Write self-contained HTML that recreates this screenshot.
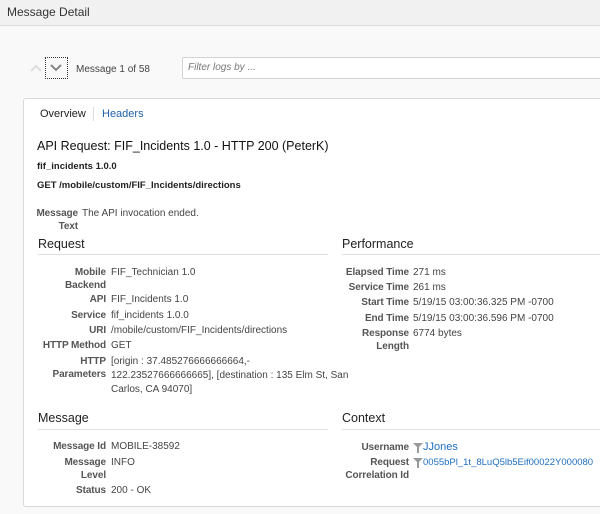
<!DOCTYPE html>
<html><head><style>
*{margin:0;padding:0;box-sizing:border-box}
body{width:600px;height:514px;overflow:hidden;background:#f9f9f9;font-family:"Liberation Sans",Arial,sans-serif;color:#333;position:relative}
.a{position:absolute;white-space:nowrap}
.hdr{position:absolute;left:0;top:0;width:600px;height:26px;background:#f1f1f1;border-bottom:1px solid #dcdcdc}
.panel{position:absolute;left:23px;top:98px;width:600px;height:409px;background:#fff;border:1px solid #d9d9d9;border-radius:3px}
.l{position:absolute;text-align:right;font-size:10px;color:#555;font-weight:bold;line-height:13px;letter-spacing:-0.1px}
.v{position:absolute;font-size:10px;color:#444;line-height:13px;white-space:nowrap}
.h{position:absolute;font-size:12.5px;color:#222;font-weight:normal}
.rule{position:absolute;height:1px;background:#dfe3e8}
.lnk{color:#1f6fbf}
</style></head><body>
<div class="hdr"></div>
<div class="a" style="left:7px;top:5px;font-size:12px;color:#333">Message Detail</div>
<svg class="a" style="left:29px;top:63px" width="14" height="10"><path d="M2 8 L7 3 L12 8" stroke="#ddd" stroke-width="2" fill="none"/></svg>
<div class="a" style="left:45px;top:57px;width:23px;height:22px;border:1px dotted #333"></div>
<svg class="a" style="left:49px;top:63px" width="14" height="10"><path d="M2 2 L7 7 L12 2" stroke="#888" stroke-width="2" fill="none"/></svg>
<div class="a" style="left:76px;top:64px;font-size:10px;color:#444">Message 1 of 58</div>
<div class="a" style="left:182px;top:57px;width:430px;height:22px;border:1px solid #d4d4d4;border-radius:2px;background:#fff"></div>
<div class="a" style="left:188px;top:62px;font-size:10px;color:#777;font-style:italic">Filter logs by ...</div>
<div class="panel"></div>
<div class="a" style="left:40px;top:108px;font-size:11px;color:#222">Overview</div>
<div class="a" style="left:93px;top:107px;width:1px;height:14px;background:#ddd"></div>
<div class="a" style="left:102px;top:108px;font-size:11px;color:#1f5fa8">Headers</div>
<div class="a" style="left:37px;top:139px;font-size:12.5px;color:#111">API Request: FIF_Incidents 1.0 - HTTP 200 (PeterK)</div>
<div class="a" style="left:37px;top:161px;font-size:9.5px;color:#222;font-weight:bold">fif_incidents 1.0.0</div>
<div class="a" style="left:37px;top:180px;font-size:9.5px;color:#222;font-weight:bold">GET /mobile/custom/FIF_Incidents/directions</div>
<div class="l" style="left:20px;width:58px;top:207px">Message<br>Text</div>
<div class="v" style="left:82px;top:207px">The API invocation ended.</div>

<div class="h" style="left:38px;top:237px">Request</div>
<div class="rule" style="left:38px;top:254px;width:290px"></div>
<div class="h" style="left:342px;top:237px">Performance</div>
<div class="rule" style="left:342px;top:254px;width:260px"></div>

<div class="l" style="left:20px;width:86px;top:266px">Mobile<br>Backend</div><div class="v" style="left:111px;top:266px">FIF_Technician 1.0</div>
<div class="l" style="left:20px;width:86px;top:293px">API</div><div class="v" style="left:111px;top:293px">FIF_Incidents 1.0</div>
<div class="l" style="left:20px;width:86px;top:309px">Service</div><div class="v" style="left:111px;top:309px">fif_incidents 1.0.0</div>
<div class="l" style="left:20px;width:86px;top:324px">URI</div><div class="v" style="left:111px;top:324px">/mobile/custom/FIF_Incidents/directions</div>
<div class="l" style="left:20px;width:86px;top:339px">HTTP Method</div><div class="v" style="left:111px;top:339px">GET</div>
<div class="l" style="left:20px;width:86px;top:355px">HTTP<br>Parameters</div><div class="v" style="left:111px;top:355px;line-height:14px">[origin : 37.485276666666664,-<br>122.23527666666665], [destination : 135 Elm St, San<br>Carlos, CA 94070]</div>

<div class="l" style="left:320px;width:89px;top:266px">Elapsed Time</div><div class="v" style="left:413px;top:266px">271 ms</div>
<div class="l" style="left:320px;width:89px;top:281px">Service Time</div><div class="v" style="left:413px;top:281px">261 ms</div>
<div class="l" style="left:320px;width:89px;top:296px">Start Time</div><div class="v" style="left:413px;top:296px">5/19/15 03:00:36.325 PM -0700</div>
<div class="l" style="left:320px;width:89px;top:312px">End Time</div><div class="v" style="left:413px;top:312px">5/19/15 03:00:36.596 PM -0700</div>
<div class="l" style="left:320px;width:89px;top:327px">Response<br>Length</div><div class="v" style="left:413px;top:327px">6774 bytes</div>

<div class="h" style="left:38px;top:411px">Message</div>
<div class="rule" style="left:38px;top:429px;width:290px"></div>
<div class="h" style="left:342px;top:411px">Context</div>
<div class="rule" style="left:342px;top:429px;width:260px"></div>

<div class="l" style="left:20px;width:86px;top:440px">Message Id</div><div class="v" style="left:111px;top:440px">MOBILE-38592</div>
<div class="l" style="left:20px;width:86px;top:456px">Message<br>Level</div><div class="v" style="left:111px;top:456px">INFO</div>
<div class="l" style="left:20px;width:86px;top:484px">Status</div><div class="v" style="left:111px;top:484px">200 - OK</div>

<div class="l" style="left:320px;width:89px;top:441px">Username</div>
<svg class="a" style="left:413px;top:443px" width="10" height="10"><path d="M0 0 H10 L6 4 V10 H4 V4 Z" fill="#999"/></svg>
<div class="v lnk" style="left:423px;top:441px;font-size:11px">JJones</div>
<div class="l" style="left:300px;width:109px;top:456px">Request<br>Correlation Id</div>
<svg class="a" style="left:413px;top:458px" width="10" height="10"><path d="M0 0 H10 L6 4 V10 H4 V4 Z" fill="#999"/></svg>
<div class="v lnk" style="left:423px;top:456px;font-size:9.5px">0055bPl_1t_8LuQ5lb5Eif00022Y000080</div>
</body></html>
